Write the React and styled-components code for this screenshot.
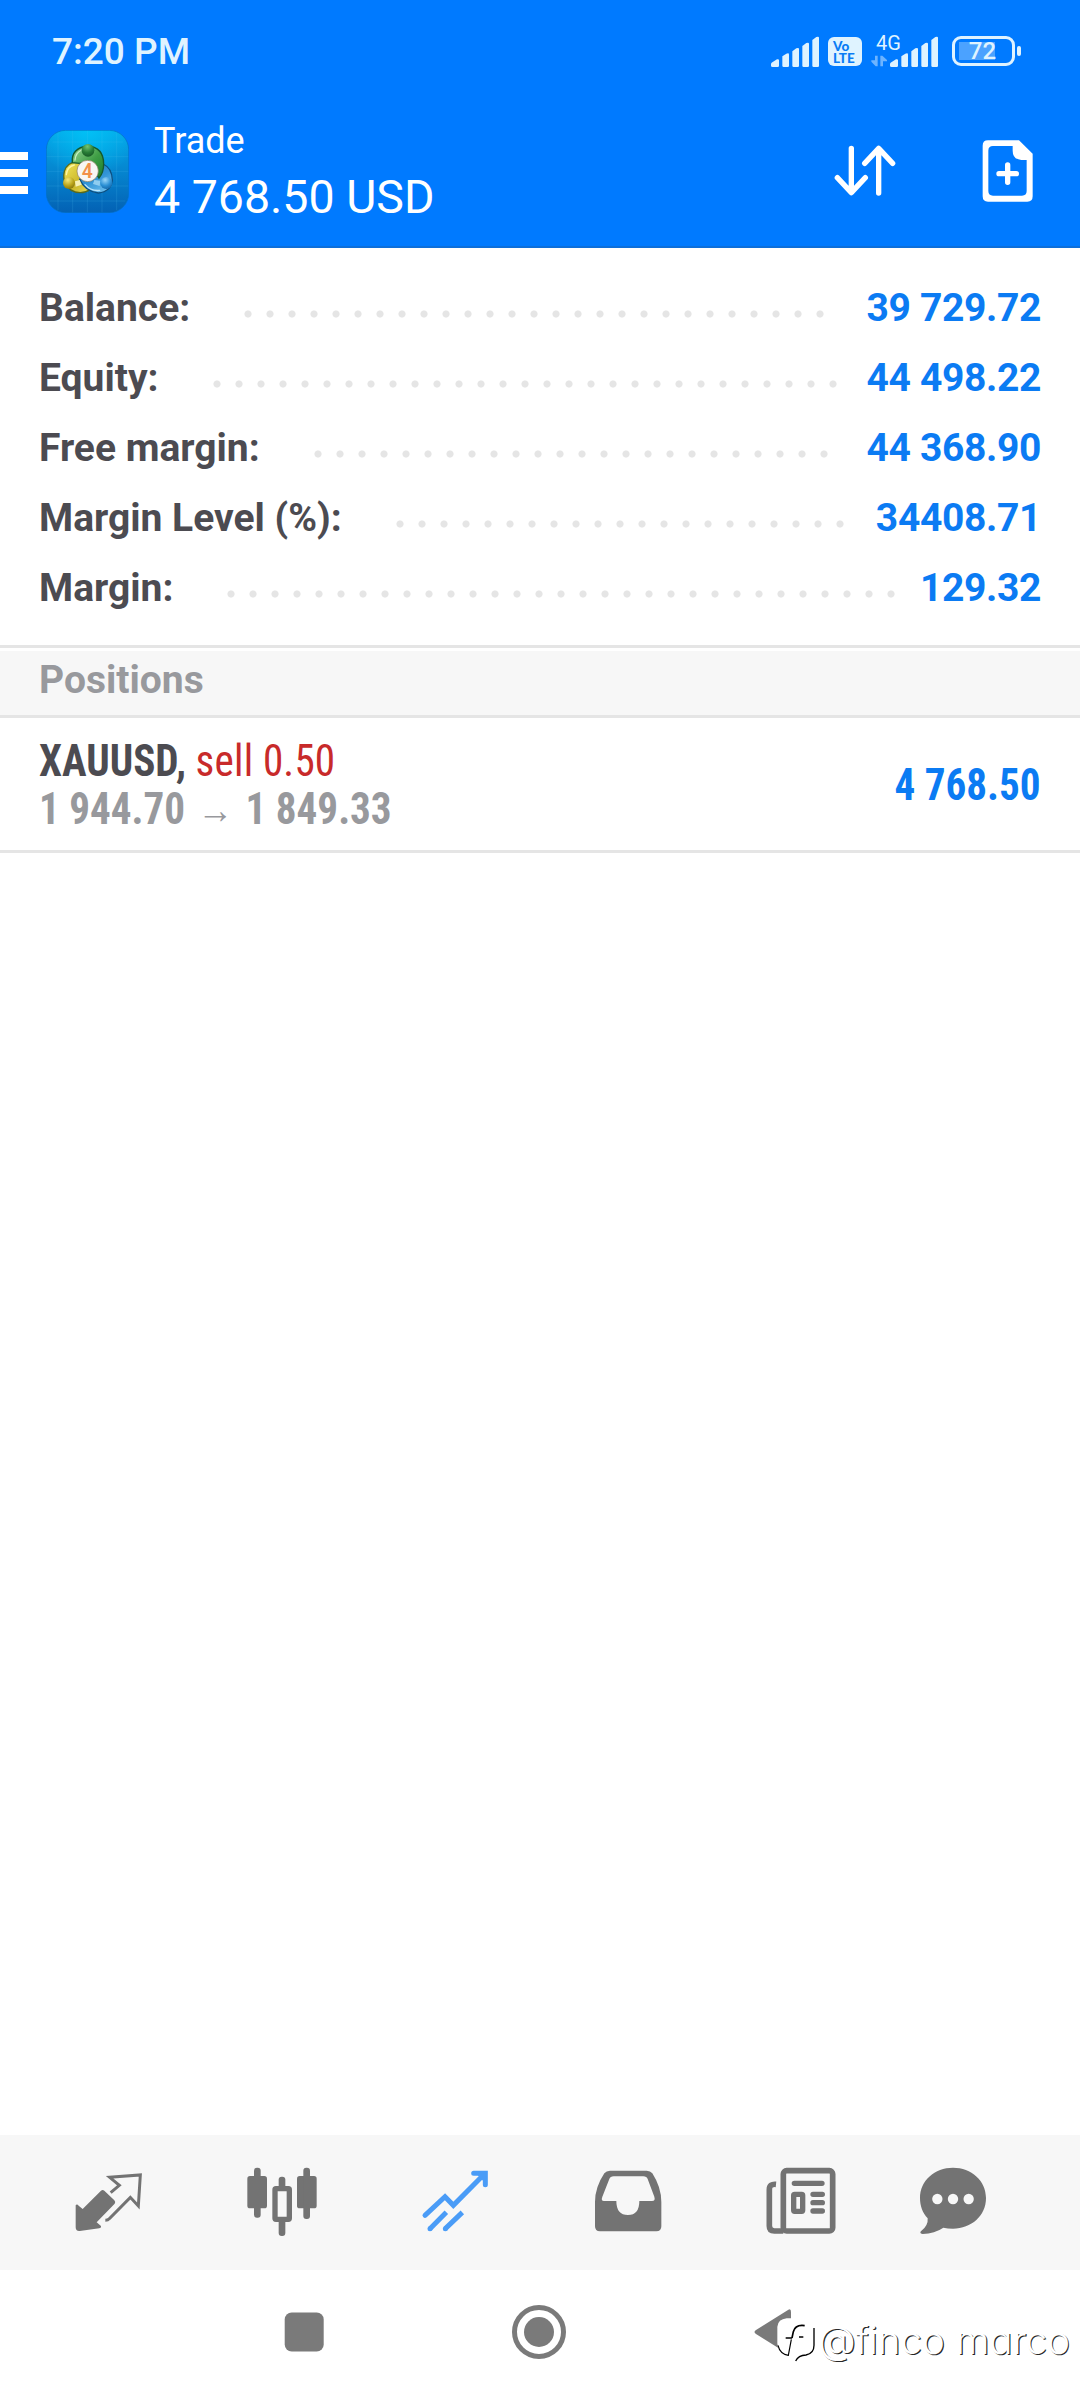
import React from 'react';
import styled, { createGlobalStyle } from 'styled-components';

const summary = [
   { label: 'Balance:', value: '39 729.72', dots: 27 },
   { label: 'Equity:', value: '44 498.22', dots: 29 },
   { label: 'Free margin:', value: '44 368.90', dots: 24 },
   { label: 'Margin Level (%):', value: '34408.71', dots: 21 },
   { label: 'Margin:', value: '129.32', dots: 31 },
];

const Signal = () => (
   <svg width='48' height='32' viewBox='0 0 144 96'>
      <g fill='#dff3ff'>
         <path d='M0 88q0-4 4-6l14-9q6-2 6 3v16q0 4-4 4H5q-5 0-5-4z' />
         <path d='M34 64l12-8q8-3 8 2v34q0 4-4 4H38q-4 0-4-4z' />
         <path d='M64 49l12-9q8-3 8 2v50q0 4-4 4H68q-4 0-4-4z' />
         <path d='M94 33l12-9q8-3 8 2v66q0 4-4 4H98q-4 0-4-4z' />
         <path d='M124 15l12-9q8-3 8 2v84q0 4-4 4h-12q-4 0-4-4z' />
      </g>
   </svg>
);

const DataArrows = () => (
   <svg width='17' height='12' viewBox='0 0 51 36'>
      <g fill='#6db4ff'>
         <path d='M12 2h8v32h-6L1 20v-4h11z' />
         <path d='M28 34h8V19h12v-4L34 2h-6z' />
      </g>
   </svg>
);

const AppLogo = () => (
   <svg width='83' height='83' viewBox='139 58 249 249'>
      <defs>
         <linearGradient id='sky' x1='0' y1='0' x2='0' y2='1'>
            <stop offset='0' stopColor='#05a6e6' />
            <stop offset='0.5' stopColor='#0585cf' />
            <stop offset='1' stopColor='#0361b4' />
         </linearGradient>
         <radialGradient id='glow' cx='0.5' cy='0' r='0.6'>
            <stop offset='0' stopColor='#00c8fa' stopOpacity='0.8' />
            <stop offset='1' stopColor='#00c8fa' stopOpacity='0' />
         </radialGradient>
         <linearGradient id='green' x1='0' y1='0' x2='1' y2='1'>
            <stop offset='0' stopColor='#9ad898' />
            <stop offset='0.55' stopColor='#3f9e45' />
            <stop offset='1' stopColor='#1a7a2c' />
         </linearGradient>
         <linearGradient id='yellow' x1='0' y1='0' x2='1' y2='1'>
            <stop offset='0' stopColor='#f3e65a' />
            <stop offset='0.6' stopColor='#cbb82a' />
            <stop offset='1' stopColor='#e8dc5c' />
         </linearGradient>
         <linearGradient id='blue' x1='0' y1='0' x2='0.6' y2='1'>
            <stop offset='0' stopColor='#1c77b8' />
            <stop offset='0.6' stopColor='#3294d6' />
            <stop offset='1' stopColor='#66b9ea' />
         </linearGradient>
         <radialGradient id='greenHead' cx='0.45' cy='0.2' r='0.8'>
            <stop offset='0' stopColor='#74c472' />
            <stop offset='0.6' stopColor='#287d36' />
            <stop offset='1' stopColor='#185a26' />
         </radialGradient>
         <radialGradient id='yellowHead' cx='0.4' cy='0.25' r='0.8'>
            <stop offset='0' stopColor='#f5e878' />
            <stop offset='0.6' stopColor='#b9a31a' />
            <stop offset='1' stopColor='#84720c' />
         </radialGradient>
         <radialGradient id='blueHead' cx='0.4' cy='0.25' r='0.8'>
            <stop offset='0' stopColor='#9ad6f8' />
            <stop offset='0.6' stopColor='#2a8fd4' />
            <stop offset='1' stopColor='#1465a6' />
         </radialGradient>
      </defs>
      <rect x='140' y='59' width='247' height='247' rx='58' fill='url(#sky)' />
      <rect x='140' y='59' width='247' height='247' rx='58' fill='url(#glow)' stroke='#056fc4' strokeWidth='2' />
      <path
         d='M175 66V299M219 60V305M263 60V305M307 60V305M351 66V299M141 138H386M141 182H386M141 226H386M150 271H377M158 94H370'
         stroke='#5cc3f2'
         strokeOpacity='0.25'
         strokeWidth='2'
      />
      <path
         d='M240 155Q204 150 194 182Q190 202 196 215Q208 246 242 246Q258 246 272 236L262 190Z'
         fill='url(#yellow)'
         stroke='#5a6a1c'
         strokeWidth='4'
      />
      <path
         d='M310 160Q337 172 338 208Q334 243 296 247Q256 243 240 206L270 186Z'
         fill='url(#blue)'
         stroke='#0d4f80'
         strokeWidth='4'
      />
      <path
         d='M218 156Q214 112 264 106Q312 110 312 160Q312 186 298 202L286 182L266 150L240 158Z'
         fill='url(#green)'
         stroke='#155a2c'
         strokeWidth='4'
      />
      <path d='M226 148Q228 126 246 118' fill='none' stroke='#c9efc2' strokeWidth='4' strokeLinecap='round' />
      <path d='M200 192Q202 168 224 163' fill='none' stroke='#fbf5a4' strokeWidth='4' strokeLinecap='round' />
      <path d='M256 222Q274 242 300 239' fill='none' stroke='#bfe7fb' strokeWidth='4' strokeLinecap='round' />
      <path d='M226 212L240 208L246 222L228 228Z' fill='#f6f0b4' />
      <path d='M284 208L302 210L300 226L280 220Z' fill='#8fcdf0' />
      <circle cx='265' cy='119' r='19' fill='url(#greenHead)' />
      <circle cx='208' cy='217' r='18' fill='url(#yellowHead)' />
      <circle cx='320' cy='217' r='18' fill='url(#blueHead)' />
      <circle cx='264' cy='181' r='32' fill='#f8f6f4' stroke='#897b5f' strokeWidth='2' />
      <text
         x='263'
         y='202'
         textAnchor='middle'
         fontFamily='Roboto, sans-serif'
         fontSize='58'
         fontWeight='600'
         fill='#f2914a'
      >
         4
      </text>
   </svg>
);

const SortIcon = () => (
   <svg width='62' height='52' viewBox='282 436 186 156'>
      <path
         d='M334 446V578M292 534L334 579L376 534M416 580V447M374 491L416 446L458 491'
         fill='none'
         stroke='#fff'
         strokeWidth='16'
         strokeLinecap='round'
         strokeLinejoin='round'
      />
   </svg>
);

const NewOrderIcon = () => (
   <svg width='52' height='62' viewBox='727 420 156 186'>
      <path
         fill='#fff'
         fillRule='evenodd'
         d='M745 421H838L879 461V589Q879 605 863 605H745Q729 605 729 589V437Q729 421 745 421ZM760 438Q746 438 746 452V573Q746 587 760 587H847Q861 587 861 573V480H845Q819 478 819 452V438Z'
      />
      <path d='M804 495V547M778 521H830' stroke='#fff' strokeWidth='16' strokeLinecap='round' />
   </svg>
);

const QuotesIcon = () => (
   <svg width='70' height='72' viewBox='101 138 210 216'>
      <path
         fill='#737373'
         d='M182 212Q187 208 192 212L222 241Q227 246 223 251L169 307L182 318Q184 323 177 325L118 333Q106 334 106 322V256Q110 251 115 257L127 267Z'
      />
      <path
         d='M211 218L237 196L208 172L300 165L294 258L270 232L207 296Q203 301 195 301'
         fill='none'
         stroke='#737373'
         strokeWidth='9'
      />
   </svg>
);

const ChartIcon = () => (
   <svg width='72' height='72' viewBox='615 138 216 216'>
      <g fill='#737373'>
         <rect x='619' y='168' width='59' height='97' rx='8' />
         <rect x='639' y='143' width='20' height='150' rx='9' />
         <rect x='768' y='168' width='59' height='97' rx='8' />
         <rect x='787' y='143' width='20' height='154' rx='9' />
         <rect x='713' y='170' width='20' height='40' rx='9' />
         <rect x='713' y='295' width='20' height='53' rx='9' />
      </g>
      <rect x='702' y='206' width='43' height='92' rx='3' fill='#f7f7f7' stroke='#737373' strokeWidth='16' />
   </svg>
);

const TradeIcon = () => (
   <svg width='72' height='72' viewBox='1134 138 216 216'>
      <path
         d='M1152 286L1212 230L1237 256L1322 170M1298 160H1333V194'
         fill='none'
         stroke='#4a9cf7'
         strokeWidth='15'
         strokeLinecap='round'
      />
      <path d='M1167 326L1216 277M1213 326L1264 277' fill='none' stroke='#4a9cf7' strokeWidth='15' />
      <circle cx='1167' cy='326' r='7.5' fill='#4a9cf7' />
      <circle cx='1213' cy='326' r='7.5' fill='#4a9cf7' />
      <path d='M1305 160H1333V190Z' fill='#4a9cf7' />
   </svg>
);

const HistoryIcon = () => (
   <svg width='72' height='72' viewBox='94 138 216 216'>
      <path
         fill='#737373'
         fillRule='evenodd'
         d='M148 152H258Q269 152 275 160Q302 202 302 246V319Q302 334 287 334H118Q103 334 103 319V246Q103 202 131 160Q137 152 148 152ZM159 169Q149 169 146 177L125 230Q120 243 130 243H167Q167 285 202 285Q236 285 236 243H274Q285 243 281 230L261 177Q258 169 248 169Z'
      />
   </svg>
);

const NewsIcon = () => (
   <svg width='72' height='72' viewBox='615 138 216 216'>
      <rect x='670' y='152' width='148' height='181' rx='10' fill='none' stroke='#737373' strokeWidth='17' />
      <path d='M648 193Q628 191 628 209V318Q628 333 643 333H670' fill='none' stroke='#737373' strokeWidth='17' />
      <path
         d='M703 190H786M759 223H787M759 248H787M759 273H787'
         stroke='#737373'
         strokeWidth='16'
         strokeLinecap='round'
      />
      <rect x='701' y='223' width='27' height='51' rx='3' fill='none' stroke='#737373' strokeWidth='16' />
   </svg>
);

const ChatIcon = () => (
   <svg width='72' height='72' viewBox='1071 138 216 216'>
      <path
         fill='#737373'
         d='M1179 143C1234 143 1278 182 1278 234C1278 287 1234 326 1179 326Q1163 326 1150 323Q1124 341 1088 342Q1075 340 1086 331Q1105 315 1103 295C1088 279 1080 258 1080 234C1080 182 1124 143 1179 143Z'
      />
      <g fill='#f7f7f7'>
         <circle cx='1132' cy='237' r='15.5' />
         <circle cx='1179' cy='237' r='15.5' />
         <circle cx='1226' cy='237' r='15.5' />
      </g>
   </svg>
);

const FincoLogo = () => (
   <svg width='42' height='48' viewBox='136 148 126 144'>
      <path
         fill='#fff'
         d='M168 155H228Q252 155 252 185V238Q252 262 232 268L217 270Q205 272 194 285L200 262L170 268Q140 258 140 230V180Q142 158 168 155Z'
      />
      <path d='M142 236Q148 262 173 266L182 218' fill='none' stroke='#000' strokeWidth='3.5' />
      <path d='M250 184V236Q250 261 226 265Q203 266 195 283' fill='none' stroke='#000' strokeWidth='4' />
      <path d='M222 177Q194 173 188 195L184 214' fill='none' stroke='#000' strokeWidth='5' />
      <path d='M165 214H184M205 211H218' stroke='#000' strokeWidth='4' />
   </svg>
);

const App = () => {
   return (
      <>
         <GlobalStyle />
         <Screen>
            <Header>
               <StatusBar>
                  <Clock>7:20 PM</Clock>
                  <StatusIcons>
                     <Signal />
                     <Volte>
                        <span>Vo</span>
                        <span>LTE</span>
                     </Volte>
                     <Network>
                        <span>4G</span>
                        <DataArrows />
                     </Network>
                     <Signal />
                     <Battery>
                        <BatteryBody>72</BatteryBody>
                        <BatteryTip />
                     </Battery>
                  </StatusIcons>
               </StatusBar>
               <Toolbar>
                  <Menu>
                     <span />
                     <span />
                     <span />
                  </Menu>
                  <AppLogo />
                  <Titles>
                     <h1>Trade</h1>
                     <p>4 768.50 USD</p>
                  </Titles>
                  <Actions>
                     <SortIcon />
                     <NewOrderIcon />
                  </Actions>
               </Toolbar>
            </Header>

            <Summary>
               {summary.map((row) => (
                  <SummaryRow key={row.label}>
                     <span>{row.label}</span>
                     <Leader $dots={row.dots} />
                     <Amount>{row.value}</Amount>
                  </SummaryRow>
               ))}
            </Summary>

            <SectionTitle>Positions</SectionTitle>
            <Position>
               <Details>
                  <Deal>
                     <Symbol>XAUUSD,</Symbol>
                     <Side>sell 0.50</Side>
                  </Deal>
                  <Prices>
                     <span>1 944.70</span>
                     <Arrow>→</Arrow>
                     <span>1 849.33</span>
                  </Prices>
               </Details>
               <Profit>4 768.50</Profit>
            </Position>

            <Content />

            <TabBar>
               <QuotesIcon />
               <ChartIcon />
               <TradeIcon />
               <HistoryIcon />
               <NewsIcon />
               <ChatIcon />
            </TabBar>
            <SystemNav>
               <svg width='40' height='40' viewBox='0 0 40 40'>
                  <rect x='0.7' y='0.5' width='39' height='39' rx='7' fill='#7a7a7a' />
               </svg>
               <svg width='54' height='54' viewBox='0 0 54 54'>
                  <circle cx='27' cy='27' r='24.5' fill='none' stroke='#7a7a7a' strokeWidth='5' />
                  <circle cx='27' cy='27' r='15' fill='#7a7a7a' />
               </svg>
               <svg width='38' height='48' viewBox='0 0 38 48'>
                  <path d='M2 22L34 2Q37 0 37 4V44Q37 48 34 46L2 26Q-1 24 2 22Z' fill='#7a7a7a' />
               </svg>
               <Watermark>
                  <FincoLogo />
                  <span>@finco marco</span>
               </Watermark>
            </SystemNav>
         </Screen>
      </>
   );
};

const GlobalStyle = createGlobalStyle`
   * {
      box-sizing: border-box;
   }
   body {
      margin: 0;
      background: #fff;
      font-family: Roboto, sans-serif;
   }
   svg {
      display: block;
      flex: none;
   }
`;
const Screen = styled.div`
   display: flex;
   flex-direction: column;
   width: 1080px;
   height: 2400px;
   overflow: hidden;
   white-space: nowrap;
   background: #fff;
`;
const Header = styled.header`
   height: 248px;
   background: #007aff;
   border-bottom: 2px solid #0d6fda;
   color: #fff;
`;
const StatusBar = styled.div`
   display: flex;
   justify-content: space-between;
   height: 104px;
   padding: 0 59px 0 52px;
   color: #dff3ff;
`;
const Clock = styled.span`
   font-size: 37px;
   font-weight: 500;
   line-height: 104px;
`;
const StatusIcons = styled.div`
   display: flex;
   align-items: flex-start;
   padding-top: 35px;
`;
const Volte = styled.div`
   display: flex;
   flex-direction: column;
   width: 34px;
   height: 29px;
   margin: 2px 9px 0;
   padding: 3px 0 0 5px;
   border-radius: 6px;
   background: #dff3ff;
   color: #0a7cf5;
   font-family: Lato, sans-serif;
   font-size: 13.5px;
   font-weight: 900;
   line-height: 12px;
`;
const Network = styled.div`
   width: 19px;
   margin-top: -4px;

   span {
      display: block;
      height: 24px;
      margin-left: 5px;
      font-size: 20px;
      line-height: 24px;
   }
`;
const Battery = styled.div`
   display: flex;
   align-items: center;
   gap: 2px;
   margin: 1px 0 0 14px;
`;
const BatteryBody = styled.div`
   width: 63px;
   height: 30px;
   padding-right: 2px;
   border: 3px solid #dff3ff;
   border-radius: 9px;
   background: linear-gradient(#4ba2ff, #4ba2ff) 4px 3px / 36px 18px no-repeat;
   font-size: 24px;
   font-weight: 500;
   line-height: 25px;
   text-align: center;
`;
const BatteryTip = styled.div`
   width: 4px;
   height: 10px;
   border-radius: 2px;
   background: #dff3ff;
`;
const Toolbar = styled.div`
   display: flex;
   align-items: center;
   height: 134px;
`;
const Menu = styled.div`
   display: flex;
   flex-direction: column;
   gap: 9px;
   width: 46px;
   padding-top: 3px;

   span {
      width: 28px;
      height: 8px;
      background: #fff;
   }
`;
const Titles = styled.div`
   margin-left: 25px;
   padding-top: 2px;

   h1 {
      margin: 0;
      font-size: 36px;
      font-weight: 400;
      line-height: 46px;
   }
   p {
      margin: 4px 0 0;
      font-size: 46.5px;
      line-height: 58px;
   }
`;
const Actions = styled.div`
   display: flex;
   align-items: center;
   gap: 86px;
   margin-left: auto;
   padding-right: 46px;
`;
const Summary = styled.section`
   padding: 25px 39px 22px;
   border-bottom: 3px solid #e5e5e5;
`;
const SummaryRow = styled.div`
   display: flex;
   height: 70px;
   color: #4c4b51;
   font-size: 39px;
   font-weight: 700;
   line-height: 70px;
`;
const Leader = styled.div`
   width: ${({ $dots }) => $dots * 22}px;
   height: 8px;
   margin: 37px 0 0 47px;
   background: radial-gradient(circle at center, #e5e5e5 3.1px, transparent 4px) 0 0 / 22px 8px;
`;
const Amount = styled.span`
   margin-left: auto;
   color: #0b7bf3;
   letter-spacing: -0.35px;
`;
const SectionTitle = styled.h2`
   height: 67px;
   margin: 3px 0 0;
   padding-left: 39px;
   border-bottom: 3px solid #e5e5e5;
   background: #f7f7f7;
   color: #98999d;
   font-size: 39px;
   font-weight: 700;
   line-height: 58px;
`;
const Position = styled.div`
   display: flex;
   align-items: center;
   justify-content: space-between;
   height: 135px;
   padding: 3px 39px 0;
   border-bottom: 3px solid #e5e5e5;
   font-family: 'Roboto Condensed', Roboto, sans-serif;
   font-size: 43.5px;
   font-stretch: 75%;
   line-height: 48px;
`;
const Details = styled.div`
   transform: scaleX(0.945);
   transform-origin: left;
`;
const Deal = styled.div`
   display: flex;
   gap: 10px;
`;
const Symbol = styled.span`
   color: #4c4b51;
   font-weight: 700;
`;
const Side = styled.span`
   color: #c82a2a;
   letter-spacing: 0.2px;
`;
const Prices = styled.div`
   display: flex;
   color: #98999d;
   font-weight: 700;
`;
const Arrow = styled.span`
   width: 64px;
   font-size: 38px;
   text-align: center;
`;
const Profit = styled.span`
   color: #0b7bf3;
   font-weight: 700;
   transform: scaleX(0.945);
   transform-origin: right;
`;
const Content = styled.main`
   flex: 1;
`;
const TabBar = styled.nav`
   display: grid;
   grid-template-columns: repeat(5, 173px) 132px;
   place-items: center;
   height: 135px;
   padding: 0 0 1px 22px;
   background: #f7f7f7;
`;
const SystemNav = styled.nav`
   position: relative;
   display: flex;
   align-items: center;
   gap: 188px;
   height: 130px;
   padding: 0 0 7px 284px;
`;
const Watermark = styled.div`
   position: absolute;
   right: 10px;
   bottom: 36px;
   display: flex;
   align-items: center;
   color: #fff;
   font-family: Inter, sans-serif;
   font-size: 38.5px;
   font-weight: 300;
   font-feature-settings: 'cv11';
   line-height: 48px;
   text-shadow: 1.2px 1.2px 0 rgba(0, 0, 0, 0.85);
`;

export default App;
